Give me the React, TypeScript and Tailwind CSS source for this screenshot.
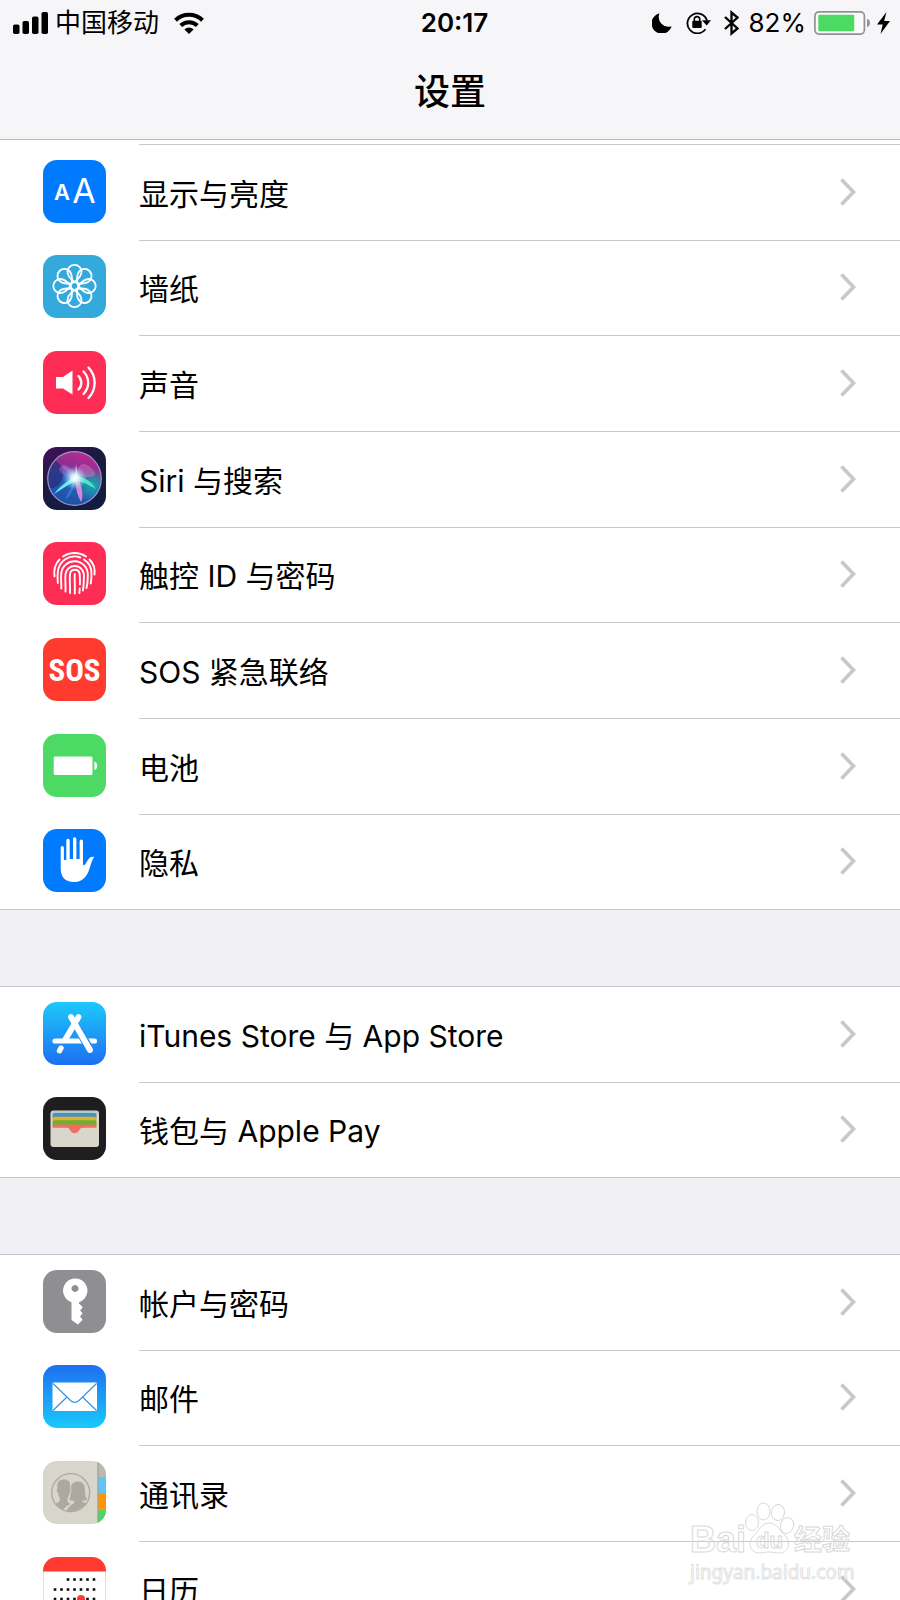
import type { ReactNode } from "react";

const PETALS = [0, 45, 90, 135, 180, 225, 270, 315];

function Tile({ bg, children }: { bg: string; children: ReactNode }) {
  return (
    <svg viewBox="0 0 63 63" className="size-[63px] shrink-0" aria-hidden="true">
      <defs>
        <linearGradient id="skyDown" x1="0" y1="0" x2="0" y2="1">
          <stop offset="0" stopColor="#1dc9fb" />
          <stop offset="1" stopColor="#1d6ff2" />
        </linearGradient>
        <linearGradient id="skyUp" x1="0" y1="0" x2="0" y2="1">
          <stop offset="0" stopColor="#1e6ff1" />
          <stop offset="1" stopColor="#1ac9fc" />
        </linearGradient>
        <linearGradient id="siriBack" x1="0" y1="0" x2="0.7" y2="1">
          <stop offset="0" stopColor="#43105c" />
          <stop offset="0.45" stopColor="#1c1a40" />
          <stop offset="1" stopColor="#101d3e" />
        </linearGradient>
        <clipPath id="tileClip">
          <rect width="63" height="63" rx="14" />
        </clipPath>
      </defs>
      <g clipPath="url(#tileClip)">
        <rect width="63" height="63" fill={bg} />
        {children}
      </g>
    </svg>
  );
}

const DisplayIcon = () => (
  <Tile bg="#007aff">
    <g fill="#fff" fontFamily="Inter, sans-serif" textAnchor="middle">
      <text x="19" y="40" fontSize="22" fontWeight="600">A</text>
      <text x="41" y="43" fontSize="34" fontWeight="400">A</text>
    </g>
  </Tile>
);

const WallpaperIcon = () => (
  <Tile bg="#34aadc">
    <g transform="translate(31.5 31)" fill="none" stroke="#fff" strokeWidth="1.8">
      {PETALS.map((a) => (
        <path
          key={a}
          transform={`rotate(${a})`}
          d="M0-4C-4-7-7-10.500-7-14.200A7 7 0 0 1 7-14.200C7-10.500 4-7 0-4Z"
        />
      ))}
      <circle r="3.8" />
    </g>
  </Tile>
);

const SoundIcon = () => (
  <Tile bg="#ff2d55">
    <path d="M13 26h7l9.5-6.500v24L20 37.500h-7z" fill="#fff" />
    <g fill="none" stroke="#fff" strokeWidth="2.400" strokeLinecap="round">
      <path d="M35.500 25a9.500 9.500 0 0 1 0 13.500" />
      <path d="M40.500 20.500a16 16 0 0 1 0 22.500" />
      <path d="M45.500 16.500a22 22 0 0 1 0 30.500" />
    </g>
  </Tile>
);

const SiriIcon = () => (
  <Tile bg="url(#siriBack)">
    <defs>
      <linearGradient id="siriOrb" x1="0.7" y1="0" x2="0.35" y2="1">
        <stop offset="0" stopColor="#c02a8f" />
        <stop offset="0.32" stopColor="#8c2f92" />
        <stop offset="0.52" stopColor="#2d62b8" />
        <stop offset="1" stopColor="#1b4fa8" />
      </linearGradient>
      <radialGradient id="siriGlow" cx="0.5" cy="0.5" r="0.5">
        <stop offset="0" stopColor="#fff" />
        <stop offset="0.3" stopColor="#e4fbff" stopOpacity="0.9" />
        <stop offset="1" stopColor="#7fd4f5" stopOpacity="0" />
      </radialGradient>
      <radialGradient id="siriTeal" cx="0.5" cy="0.5" r="0.5">
        <stop offset="0" stopColor="#16a9a6" />
        <stop offset="1" stopColor="#16a9a6" stopOpacity="0" />
      </radialGradient>
      <clipPath id="orbClip">
        <circle cx="31.500" cy="31.500" r="26.500" />
      </clipPath>
    </defs>
    <g clipPath="url(#orbClip)">
      <circle cx="31.500" cy="31.500" r="27" fill="url(#siriOrb)" />
      <ellipse cx="50" cy="38" rx="18" ry="17" fill="url(#siriTeal)" />
      <ellipse cx="8" cy="27" rx="12" ry="14" fill="#29206b" opacity="0.6" />
      <path d="M32 31C24 27 17 18 20 18c5 0 10 5 13 9 2-5 4-11 8-10 6 1 12 8 11 11-3 3-12 2-20 3z" fill="#e58ad0" opacity="0.38" />
      <path d="M32 31C24 31 13 25 17 20c5-3 12 4 15 11z" fill="#a874d8" opacity="0.4" />
      <path d="M33 29C27 32 18 38 11 47c8-5 15-10 23-14z" fill="#5ff0ee" />
      <path d="M32 29c8 0 16 5 21 13-7-4-13-7-21-9z" fill="#4de6c1" />
      <path d="M33 31c-1 9 1 16 5 24 3-5 1-16-3-24z" fill="#e98bd9" opacity="0.9" />
      <path d="M32 32l1-15 2 14z" fill="#ffc2ea" />
      <path d="M32 31c-3 9-8 16-10 22 6-4 10-13 10-22z" fill="#3a8de0" opacity="0.6" />
    </g>
    <circle cx="32" cy="31" r="12" fill="url(#siriGlow)" />
    <circle cx="31.500" cy="31.500" r="26.800" fill="none" stroke="#a894cf" strokeWidth="1.200" />
  </Tile>
);

const TouchIcon = () => (
  <Tile bg="#ff2d55">
    <g fill="none" stroke="#fff" strokeWidth="1.900" strokeLinecap="round">
      <path d="M20 14.500a20.500 20.500 0 0 1 23 0" />
      <path d="M16.500 17.500C12 22 10.500 27 11.500 34.500" />
      <path d="M46.500 17.500C51 22 52.300 27 51.500 32.500" />
      <path d="M14.800 41c0-4-.6-6.500 0-10.500a16.800 16.800 0 0 1 22.500-15" />
      <path d="M41 17.500a16.500 16.500 0 0 1 7.500 14.500c0 3 0 6-.8 9.500" />
      <path d="M18.300 46.500c.3-6-.8-10.500 0-15.500a13.300 13.300 0 0 1 26.500 1c0 5 0 9-1.300 14" />
      <path d="M22.500 49.500c.4-7-.7-12 0-17.500a9.300 9.300 0 0 1 18.400 0c0 6 0 11-1 16.500" />
      <path d="M27 51c.3-7-.6-13 0-19a4.900 4.900 0 0 1 9.700 0c.3 4 .3 7 .2 10.500" />
      <path d="M31.800 51.500c.2-6-.2-13-.1-19.500" />
      <path d="M36.700 46.500l-.3 4.500" />
    </g>
  </Tile>
);

const SosIcon = () => (
  <Tile bg="#ff3b30">
    <text x="31.500" y="42.500" fontSize="31" fontWeight="700" textAnchor="middle" fill="#fff" fontFamily="'Liberation Sans Narrow', 'Roboto Condensed', 'Open Sans Condensed', sans-serif">
      SOS
    </text>
  </Tile>
);

const BatteryIcon = () => (
  <Tile bg="#4cd964">
    <rect x="10.700" y="22.500" width="38.800" height="18.500" rx="1.500" fill="#fff" />
    <path d="M51.300 27.500q3 .8 3 4.200t-3 4.200z" fill="#fff" />
  </Tile>
);

const PrivacyIcon = () => (
  <Tile bg="#007aff">
    <path
      fill="#fff"
      d="M17.700 18.500a1.600 1.600 0 0 1 3.200 0V31h2.400V11.500a1.700 1.700 0 0 1 3.400 0V30H30V10a1.700 1.700 0 0 1 3.400 0V30h3.200V12.300a1.700 1.700 0 0 1 3.400 0V34.500c0 2 1.300 2.400 2.300.8l3-5c1.500-2 3.700-2.800 5.900-2.300-1.700 2-2.600 5-3.600 8C45 46 41 53 31 53c-9 0-13.300-5-13.300-14z"
    />
  </Tile>
);

const StoreIcon = () => (
  <Tile bg="url(#skyDown)">
    <g fill="none" strokeLinecap="round">
      <path d="M12 39H51.500" stroke="#fff" strokeWidth="5.200" />
      <path d="M35.500 15L22 38" stroke="#fff" strokeWidth="5.800" />
      <path d="M35 26.500L47.500 48.500" stroke="#2592f7" strokeWidth="8.200" strokeLinecap="butt" />
      <path d="M28 15L47 48" stroke="#fff" strokeWidth="5.800" />
      <path d="M18 46l-1.500 2.700" stroke="#fff" strokeWidth="5.400" />
    </g>
  </Tile>
);

const WalletIcon = () => (
  <Tile bg="#1e1e20">
    <rect x="7.500" y="13.500" width="48.500" height="36.500" rx="3" fill="#d9d7cc" />
    <rect x="8.500" y="14" width="46.500" height="4" rx="2" fill="#b4cbd4" />
    <path d="M9.500 18q0-2 2-2h40q2 0 2 2v3h-44z" fill="#4394bd" />
    <path d="M9.500 21.500q0-1.800 2-1.800h40q2 0 2 1.800v3h-44z" fill="#dfb12d" />
    <path d="M9.500 25q0-1.800 2-1.800h40q2 0 2 1.800v4h-44z" fill="#6fae2f" />
    <path d="M9.500 29q0-1.500 2-1.500h40q2 0 2 1.500v1.700H39.500c-1.500 0-2 .8-3 2.300-1.200 2-2.700 3.300-4.800 3.300s-3.600-1.300-4.800-3.300c-1-1.500-1.500-2.300-3-2.300H9.500z" fill="#f06f63" />
  </Tile>
);

const KeyIcon = () => (
  <Tile bg="#8e8e93">
    <path
      fill="#fff"
      fillRule="evenodd"
      d="M28.500 32.200a12.200 12.200 0 1 1 7.500 0v1.300l3.800 3.800-2.600 3.200 2.400 3-2.600 3 2.600 3.200-4.600 4.800-6.500-4.500zM32 15a3.500 3.500 0 1 0 .01 0z"
    />
  </Tile>
);

const MailIcon = () => (
  <Tile bg="url(#skyUp)">
    <rect x="9.500" y="17.500" width="44.500" height="28.500" rx="1" fill="#fff" />
    <g fill="none" stroke="#3b93dc" strokeWidth="1.200">
      <path d="M10 18.500L27.500 35.500c2.800 2.600 5.700 2.600 8.500 0L53.500 18.500" />
      <path d="M10 45.500L24 32M53.500 45.500L39.500 32" />
    </g>
  </Tile>
);

const ContactsIcon = () => (
  <Tile bg="#d8d5ca">
    <defs>
      <clipPath id="peopleClip">
        <circle cx="27.700" cy="31.700" r="18.500" />
      </clipPath>
    </defs>
    <rect x="55" y="0" width="8" height="16.500" fill="#b9b8b3" />
    <rect x="55" y="16" width="8" height="16" fill="#5ec5f5" />
    <rect x="55" y="32" width="8" height="16.500" fill="#ff9500" />
    <rect x="55" y="48.500" width="8" height="15" fill="#4fd266" />
    <rect x="54.300" y="0" width="1.200" height="63" fill="#a3a198" />
    <circle cx="27.700" cy="31.700" r="19" fill="none" stroke="#aea7a2" strokeWidth="1.300" />
    <g clipPath="url(#peopleClip)" fill="#aea7a2">
      <path d="M34.500 20.500c5 0 7.500 3 7.500 8.500 0 5 .5 8 2.500 9.500-1.500 1-3.500 1.200-5.500 1.200 0 2 5 2.300 8.500 4.300V53H20l8-9c2-1 3.500-2 3.500-4.300-2 0-4-.2-5.500-1.200 1.500-1.500 1.500-4.500 1.500-9.500 0-5.500 2.500-8.500 7-8.500z" />
      <path
        d="M6 44c4.500-1.800 10.500-2 10.500-5.500 0-2-1.700-3.500-2-6.500-1.700-1-1.200-4-.5-4.500-1-6 1.500-9.500 7-9.500 5 0 7.500 3.500 6.500 9.500.8.500 1 3.500-.5 4.500-.3 3-2.200 4.500-2.200 6.500 0 3 2.500 3.200 2.500 5.200-4.800 1.800-7.300 4.800-7.300 9.300H6z"
        stroke="#d8d5ca"
        strokeWidth="1"
      />
    </g>
  </Tile>
);

const CalendarIcon = () => (
  <Tile bg="#ffffff">
    <rect x="0.500" y="0.500" width="62" height="62" rx="13.500" fill="none" stroke="#dedede" />
    <rect width="63" height="14.500" fill="#ff3b30" />
    {[22.5, 32.5, 42, 51.5].flatMap((y, r) =>
      [12, 18.500, 25, 31.500, 38, 44.500, 51]
        .filter((x) => r > 0 || x >= 25)
        .map((x) => <rect key={`${x}-${y}`} x={x - 1.300} y={y - 1.300} width="2.600" height="2.600" fill="#111" />)
    )}
    <circle cx="38" cy="42" r="4" fill="#ff3b30" />
  </Tile>
);

type Item = { label: string; icon: () => ReactNode };

const GROUPS: Item[][] = [
  [
    { label: "显示与亮度", icon: DisplayIcon },
    { label: "墙纸", icon: WallpaperIcon },
    { label: "声音", icon: SoundIcon },
    { label: "Siri 与搜索", icon: SiriIcon },
    { label: "触控 ID 与密码", icon: TouchIcon },
    { label: "SOS 紧急联络", icon: SosIcon },
    { label: "电池", icon: BatteryIcon },
    { label: "隐私", icon: PrivacyIcon },
  ],
  [
    { label: "iTunes Store 与 App Store", icon: StoreIcon },
    { label: "钱包与 Apple Pay", icon: WalletIcon },
  ],
  [
    { label: "帐户与密码", icon: KeyIcon },
    { label: "邮件", icon: MailIcon },
    { label: "通讯录", icon: ContactsIcon },
    { label: "日历", icon: CalendarIcon },
  ],
];

function Row({ item, fullLine }: { item: Item; fullLine: boolean }) {
  const Icon = item.icon;
  return (
    <li className={`h-24 nth-[3n+2]:h-[95px] border-[#c8c7cc] ${fullLine ? "border-t" : ""}`}>
      <a href="#" className="flex h-full items-center pb-0.5 pl-[43px]">
        <Icon />
        <span className={`ml-[33px] flex h-full flex-1 items-center justify-between border-[#c8c7cc] pr-11 ${fullLine ? "" : "border-t"}`}>
          <span className="pt-1 text-[30px] leading-9 whitespace-nowrap">{item.label}</span>
          <svg viewBox="0 0 16 28" className="h-7 w-4" fill="none" stroke="#c7c7cc" strokeWidth="3.600" aria-hidden="true">
            <path d="M1.500 1.500L13.500 14L1.500 26.500" />
          </svg>
        </span>
      </a>
    </li>
  );
}

function StatusBar() {
  return (
    <div className="grid h-[45px] grid-cols-[1fr_auto_1fr] items-center pr-[10px] pl-[13px] text-[26px] leading-none">
      <div className="flex items-center">
        <svg viewBox="0 0 35 22" className="h-[22px] w-[35px]" aria-hidden="true">
          <rect x="0" y="12.500" width="6.500" height="9.500" rx="1.800" />
          <rect x="9.500" y="9" width="6.500" height="13" rx="1.800" />
          <rect x="19" y="4.500" width="6.500" height="17.500" rx="1.800" />
          <rect x="28.500" y="0" width="6.500" height="22" rx="1.800" />
        </svg>
        <span className="ml-[7px]">中国移动</span>
        <svg viewBox="0 0 30 22" className="ml-[15px] h-[22px] w-[30px]" fill="none" stroke="#000" strokeWidth="4" aria-hidden="true">
          <path d="M1.500 8.200a19.500 19.500 0 0 1 27 0" />
          <path d="M6.700 13.500a12 12 0 0 1 16.600 0" />
          <path d="M15 22l-4.600-4.600a6.500 6.500 0 0 1 9.200 0z" fill="#000" stroke="none" />
        </svg>
      </div>
      <time className="pl-1.5 font-semibold">20:17</time>
      <div className="flex items-center justify-end">
        <svg viewBox="0 0 20 20" className="size-5" aria-hidden="true">
          <path d="M7.500.3A10.300 10.300 0 1 0 19.700 13.200 9.800 9.800 0 0 1 7.500.3z" />
        </svg>
        <svg viewBox="0 0 25 23" className="ml-[14px] h-[23px] w-[25px]" aria-hidden="true">
          <path d="M19.500 18.300A10 10 0 1 1 21 9.500" fill="none" stroke="#000" strokeWidth="1.800" />
          <path d="M16 9.300h9l-4.300 5.200z" />
          <rect x="6.300" y="9.800" width="9.400" height="7.200" rx="1" />
          <path d="M8.300 10.500V8.300a2.700 2.700 0 0 1 5.400 0v2.200" fill="none" stroke="#000" strokeWidth="1.600" />
        </svg>
        <svg viewBox="0 0 15 26" className="ml-[13px] h-[26px] w-[15px]" fill="none" stroke="#000" strokeWidth="2.300" aria-hidden="true">
          <path d="M1 7l12.500 11.500L7.500 23.500V2.500l6 5L1 19" />
        </svg>
        <span className="ml-[10px]">82%</span>
        <svg viewBox="0 0 56 24" className="ml-2 h-6 w-14" aria-hidden="true">
          <rect x="0.900" y="0.900" width="49.500" height="22.200" rx="4" fill="#fafafa" stroke="#929295" strokeWidth="1.700" />
          <rect x="4.300" y="3.800" width="36" height="16.400" rx="1" fill="#4cd964" />
          <path d="M53 8q3 .6 3 4t-3 4z" fill="#929295" />
        </svg>
        <svg viewBox="0 0 13 22" className="ml-[7px] h-[22px] w-[13px]" aria-hidden="true">
          <path d="M9.500 0L0 12.500h5.700L3.500 22 13 9H7.200z" />
        </svg>
      </div>
    </div>
  );
}

function Watermark() {
  return (
    <div className="pointer-events-none absolute right-12 bottom-4 w-[162px] font-['Noto_Sans'] text-transparent">
      <svg viewBox="0 0 162 58" className="h-[58px] w-full" fill="none" stroke="#d9d9d9" strokeWidth="1" aria-hidden="true">
        <ellipse cx="62" cy="20.500" rx="6.500" ry="8" />
        <ellipse cx="73.500" cy="9.500" rx="6.500" ry="8.500" />
        <ellipse cx="88" cy="10.500" rx="6.500" ry="8" transform="rotate(8 88 10.500)" />
        <ellipse cx="97" cy="23.500" rx="6.500" ry="8" transform="rotate(15 97 23.500)" />
        <path d="M79 21c-8 0-10 8-14 11.500-8 6-6 18 4 18.500 4 .2 6-1 10-1s7 1.200 11 1c9-.5 12-12 4-18.500C90 29 87 21 79 21z" />
        <text x="0" y="50" fontSize="36" fontWeight="700" fontFamily="Liberation Sans, sans-serif">Bai</text>
        <text x="66" y="46" fontSize="22" fontWeight="700" fontFamily="Liberation Sans, sans-serif">du</text>
        <text x="104" y="48" fontSize="28" fontWeight="700" fontFamily="Noto Sans CJK SC, sans-serif">经验</text>
      </svg>
      <p className="text-center text-[19px] leading-6 [-webkit-text-stroke:1px_#e2e2e2]">jingyan.baidu.com</p>
    </div>
  );
}

export default function App() {
  return (
    <div className="relative flex h-screen flex-col overflow-hidden bg-[#efeff4] font-[Inter,'Noto_Sans_CJK_SC',sans-serif] text-black">
      <header className="shrink-0 border-b border-[#b8b8bb] bg-[#f6f6f8]">
        <StatusBar />
        <h1 className="h-[94px] pt-[23px] text-center text-[36px] leading-[48px] font-medium">设置</h1>
      </header>
      <main className="flex min-h-0 flex-1 flex-col gap-[76px] overflow-hidden">
        {GROUPS.map((group, g) => (
          <ul key={g} className={`shrink-0 border-b border-[#c8c7cc] bg-white ${g === 0 ? "pt-1" : ""}`}>
            {group.map((item, i) => (
              <Row key={item.label} item={item} fullLine={g > 0 && i === 0} />
            ))}
          </ul>
        ))}
      </main>
      <Watermark />
    </div>
  );
}
